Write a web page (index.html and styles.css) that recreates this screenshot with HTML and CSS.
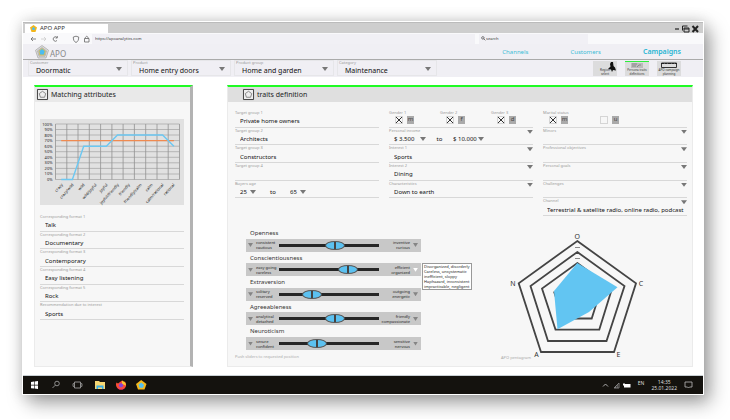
FILE: index.html
```html
<!DOCTYPE html>
<html lang="en">
<head>
<meta charset="utf-8">
<title>APO APP</title>
<link rel="stylesheet" href="styles.css">
</head>
<body>
<div class="window">
  <div class="titlebar">
    <div class="tab">
      <svg class="tab-icon" viewBox="0 0 14 14"><path d="M7 0 14 5 11 14H3L0 5Z" fill="#f2b61c"/><path d="M7 4 10 6.500 9 10H5L4 6.500Z" fill="#4cbcf0"/></svg>
      <span>APO APP</span>
    </div>
    <svg class="win-controls" viewBox="0 0 25 8"><g fill="none" stroke="#222"><path d="M1 4H5" stroke-width="1.200"/><path d="M8.500 5.500V1H13.500M10 3H15V7H10ZM10 4H15" stroke-width="1"/><path d="M18.500 1 24 7M24 1 18.500 7" stroke-width="2"/></g></svg>
  </div>
  <div class="navbar">
    <svg class="nav-icons" viewBox="0 0 62 10"><g fill="none" stroke="#666" stroke-width=".8"><path d="M6 5H1M3 3 1 5 3 7"/><path d="M11 5H16M14 3 16 5 14 7" stroke="#ccc"/><path d="M27 6.500A2.200 2.200 0 1 1 27 3.500M27.300 2V4H25.500"/><path d="M46 2.200 48.700 3C48.700 6 48 7.500 46 8.500 44 7.500 43.300 6 43.300 3Z"/><path d="M54.500 4.500H59V8H54.500ZM55.300 4.500V3.500Q56.700 1 58.200 3.500V4.500"/></g></svg>
    <input class="address" aria-label="Address" value="https://apoanalytics.com">
    <label class="search"><svg class="search-icon" viewBox="0 0 8 8"><circle cx="3" cy="3" r="2" fill="none" stroke="#333"/><path d="M4.500 4.500 7 7" stroke="#333"/></svg><input aria-label="Search" value="search"></label>
  </div>
  <header class="app-header">
    <svg class="logo" viewBox="0 0 28 28"><path d="M14 1 27 10.500 22 26H6L1 10.500Z" fill="#ddd" stroke="#aaa" stroke-width="1.500"/><path d="M14 5 23 11.700 20 22.500H8L5 11.700Z" fill="#c9c9c9" stroke="#999"/><path d="M14 7 20.500 12 18.500 20H9.500L8 12Z" fill="#4cbcf0" stroke="#e5b93a" stroke-width="1.500"/></svg>
    <span class="brand">APO</span>
    <nav class="main-nav"><a href="#channels">Channels</a><a href="#customers">Customers</a><a href="#campaigns" class="active">Campaigns</a></nav>
  </header>
  <div class="filters">
    <label class="filter"><span>Customer</span><select><option>Doormatic</option></select></label>
    <label class="filter"><span>Product</span><select><option>Home entry doors</option></select></label>
    <label class="filter"><span>Product group</span><select><option>Home and garden</option></select></label>
    <label class="filter"><span>Category</span><select><option>Maintenance</option></select></label>
    <div class="tools">
      <button class="tool"><span>Region<br>select</span><svg class="map" viewBox="0 0 8 10"><path d="M3 0H5L5.500 4 7 5.500 8 8.500 5 8 4 10 3 7.500 0 7 2.500 4.500 2 2Z" fill="#111"/></svg></button>
      <button class="tool current"><svg class="tool-art" viewBox="0 0 14 5"><path d="M1 0H13V5H1Z" fill="#bbb"/><path d="M2 1H7M2 3H6M7 4 9 2H11" stroke="#777" fill="none" stroke-width=".7"/></svg><span>Persona traits<br>definitions</span></button>
      <button class="tool"><svg class="tool-art wide" viewBox="0 0 18 6"><path d="M1.500 1H16.500V5.500H1.500Z" fill="#ddd" stroke="#333"/><path d="M1 1.500H17" stroke="#222" stroke-dasharray="3 .5"/></svg><span>APO campaign<br>planning</span></button>
    </div>
  </div>
  <main>
    <section class="panel matching">
      <h2><svg class="badge" viewBox="0 0 12 12"><path d="M.5.5H11.500V11.500H.500Z" fill="#eee" stroke="#333"/><path d="M6 2.500 9.500 5 8.300 9H3.700L2.500 5Z" fill="none" stroke="#666" stroke-width=".8"/></svg>Matching attributes</h2>
      <div class="panel-body">
        <svg class="chart" viewBox="0 0 144 86">
          <path d="M15.500 5H139.500M15.500 10.500H139.500M15.500 16H139.500M15.500 21.600H139.500M15.500 27.200H139.500M15.500 32.700H139.500M15.500 38.300H139.500M15.500 43.800H139.500M15.500 49.400H139.500M15.500 55H139.500M15.500 60.500H139.500" stroke="#aaa" stroke-width=".8"/>
          <path d="M15.500 5V60.500M26.800 5V60.500M38 5V60.500M49.300 5V60.500M60.600 5V60.500M71.900 5V60.500M83.100 5V60.500M94.400 5V60.500M105.700 5V60.500M117 5V60.500M128.200 5V60.500M139.500 5V60.500" stroke="#929292" stroke-width=".8"/>
          <path d="M21.200 21.600H133.900" stroke="#f08a50" stroke-width="1.200"/>
          <path d="M21.200 60.500H32.400L43.700 27.200H66.300L77.500 16H122.600L133.900 27.200" fill="none" stroke="#6cc8f2" stroke-width="1.400"/>
          <g class="y-axis"><text x="12.500" y="6.500">100%</text><text x="12.500" y="12">90%</text><text x="12.500" y="17.500">80%</text><text x="12.500" y="23">70%</text><text x="12.500" y="28.600">60%</text><text x="12.500" y="34.200">50%</text><text x="12.500" y="39.700">40%</text><text x="12.500" y="45.300">30%</text><text x="12.500" y="50.800">20%</text><text x="12.500" y="56.400">10%</text><text x="12.500" y="62">0%</text></g>
          <g class="x-axis"><text transform="translate(23 66) rotate(-48)">crazy</text><text transform="translate(34 66) rotate(-48)">crazy/wild</text><text transform="translate(45 66) rotate(-48)">wild</text><text transform="translate(57 66) rotate(-48)">wild/joyful</text><text transform="translate(68 66) rotate(-48)">joyful</text><text transform="translate(79 66) rotate(-48)">joyful/friendly</text><text transform="translate(90 66) rotate(-48)">friendly</text><text transform="translate(102 66) rotate(-48)">friendly/calm</text><text transform="translate(113 66) rotate(-48)">calm</text><text transform="translate(124 66) rotate(-48)">calm/rational</text><text transform="translate(135 66) rotate(-48)">rational</text></g>
        </svg>
        <div class="fields">
          <label class="field"><span>Corresponding format 1</span><input value="Talk"></label>
          <label class="field"><span>Corresponding format 2</span><input value="Documentary"></label>
          <label class="field"><span>Corresponding format 3</span><input value="Contemporary"></label>
          <label class="field"><span>Corresponding format 4</span><input value="Easy listening"></label>
          <label class="field"><span>Corresponding format 5</span><input value="Rock"></label>
          <label class="field"><span>Recommendation due to interest</span><input value="Sports"></label>
        </div>
      </div>
    </section>

    <section class="panel traits">
      <h2><svg class="badge" viewBox="0 0 12 12"><path d="M.5.5H11.500V11.500H.500Z" fill="#eee" stroke="#333"/><path d="M6 2.500 9.500 5 8.300 9H3.700L2.500 5Z" fill="none" stroke="#666" stroke-width=".8"/></svg>traits definition</h2>
      <div class="panel-body">
        <div class="columns">
          <div class="fields">
            <label class="field"><span>Target group 1</span><input value="Private home owners"></label>
            <label class="field"><span>Target group 2</span><input value="Architects"></label>
            <label class="field"><span>Target group 3</span><input value="Constructors"></label>
            <label class="field"><span>Target group 4</span><input value=""></label>
            <div class="field"><span>Buyers age</span><div class="range"><label class="pick age"><select aria-label="Minimum age"><option>25</option></select></label><span class="to">to</span><label class="pick age"><select aria-label="Maximum age"><option>65</option></select></label></div></div>
          </div>
          <div class="fields">
            <div class="field checks">
              <label><span>Gender 1</span><input type="checkbox" checked><b>m</b></label>
              <label><span>Gender 2</span><input type="checkbox" checked><b>f</b></label>
              <label><span>Gender 3</span><input type="checkbox" checked><b>d</b></label>
            </div>
            <div class="field drop"><span>Personal income</span><div class="range"><label class="pick low"><select aria-label="Lowest income"><option>$ 3.500</option></select></label><span class="to">to</span><label class="pick high"><select aria-label="Highest income"><option>$ 10.000</option></select></label></div></div>
            <label class="field drop"><span>Interest 1</span><select><option>Sports</option></select></label>
            <label class="field drop"><span>Interest 2</span><select><option>Dining</option></select></label>
            <label class="field drop"><span>Characteristics</span><select><option>Down to earth</option></select></label>
          </div>
          <div class="fields">
            <div class="field checks">
              <label><span>Marital status</span><input type="checkbox" checked><b>m</b></label>
              <label><span></span><input type="checkbox" aria-label="u"><b>u</b></label>
            </div>
            <label class="field drop"><span>Minors</span><select><option></option></select></label>
            <label class="field drop"><span>Professional objectives</span><select><option></option></select></label>
            <label class="field drop"><span>Personal goals</span><select><option></option></select></label>
            <label class="field drop"><span>Challenges</span><select><option></option></select></label>
            <label class="field drop channel"><span>Channel</span><select><option>Terrestrial &amp; satellite radio, online radio, podcast</option></select></label>
          </div>
        </div>
        <div class="lower">
          <div class="ocean">
            <div class="sliders">
              <div class="slider"><label for="o">Openness</label><div class="bar"><i></i><span>consistent<br>cautious</span><input id="o" type="range" value="57"><span class="end">inventive<br>curious</span><i></i></div></div>
              <div class="slider"><label for="c">Conscientiousness</label><div class="bar"><i></i><span>easy going<br>careless</span><input id="c" type="range" value="74"><span class="end">efficient<br>organized</span><i class="open"></i><div class="tip" role="tooltip">Disorganized, disorderly<br>Careless, unsystematic<br>inefficient, sloppy<br>Haphazard, inconsistent<br>impracticable, negligent</div></div></div>
              <div class="slider"><label for="e">Extraversion</label><div class="bar"><i></i><span>solitary<br>reserved</span><input id="e" type="range" value="29"><span class="end">outgoing<br>energetic</span><i></i></div></div>
              <div class="slider"><label for="a">Agreeableness</label><div class="bar"><i></i><span>analytical<br>detached</span><input id="a" type="range" value="57"><span class="end">friendly<br>compassionate</span><i></i></div></div>
              <div class="slider"><label for="n">Neuroticism</label><div class="bar"><i></i><span>secure<br>confident</span><input id="n" type="range" value="35"><span class="end">sensitive<br>nervous</span><i></i></div></div>
            </div>
            <p class="hint">Push sliders to requested position</p>
          </div>
          <figure>
            <svg class="pentagon" viewBox="501 227 144 128">
              <g fill="none" stroke="#444" stroke-width="1.800"><path d="M577.300 241 636 283.300 614 352H541L518.700 283.300Z"/><path d="M577.300 252 624.500 286 606.500 341H548L530.500 286Z"/><path d="M577.300 263 612 288.500 599.300 329.600H555.500L542 288.500Z"/><path d="M554 291.500 563 318.500H591.700L596 305"/></g>
              <path d="M577.300 263 617.500 287.300 589 312 557.500 329.300 554 291Z" fill="#62c5f2"/>
              <path d="M575 247.500H580M575 258.500H580" stroke="#888" stroke-width="1"/>
              <g class="corners"><text x="577.300" y="239">O</text><text x="641" y="286">C</text><text x="618.500" y="357">E</text><text x="536.500" y="357">A</text><text x="513" y="286">N</text></g>
            </svg>
            <figcaption class="hint">APO pentagram</figcaption>
          </figure>
        </div>
      </div>
    </section>
  </main>
  <footer class="taskbar">
    <svg class="apps" viewBox="0 0 118 12">
      <path d="M1 3 4 2.500V5.800H1ZM4.600 2.400 8 2V5.800H4.600ZM1 6.400H4V9.600L1 9.200ZM4.600 6.400H8V10L4.600 9.600Z" fill="#fff"/>
      <g fill="none" stroke="#aaa" stroke-width=".8"><circle cx="27" cy="4.500" r="2.300"/><path d="M25.300 6.200 22.500 9"/><path d="M44.500 3H50.500V9H44.500ZM43.500 4Q42.300 6 43.500 8M51.500 4Q52.700 6 51.500 8"/></g>
      <path d="M65 2H69L70 3H75V10H65Z" fill="#f6d774"/><path d="M66.500 6.500H73.500V10H72V8.500H68V10H66.500Z" fill="#38aee6"/>
      <path d="M86.500 3.500 88 4.500 90 3 92 1.500 93.500 3 95 2.500Q97.500 6.500 94.500 9.500 91 11.500 87.700 9.500 85 6.500 86.500 3.500Z" fill="#fb4d35"/><path d="M92 1.500Q96 3 96 6.500L92 5Z" fill="#ffc52e"/><circle cx="91" cy="6.300" r="2.100" fill="#8646d8"/><path d="M87 8Q91 11.500 95 8.500L93 10.500H89Z" fill="#f52a78"/>
      <path d="M111.200 1 116.500 5 114.500 10.500H108L106 5Z" fill="#f5b81c"/><path d="M111.200 3.500 114 5.700 113 8.700H109.500L108.500 5.700Z" fill="#55c0f0"/>
    </svg>
    <div class="tray">
      <svg class="tray-icons" viewBox="0 0 29 8"><g fill="none" stroke="#bbb" stroke-width=".9"><path d="M1 5.500 3.500 3 6 5.500"/><path d="M12 7 17 2V7ZM13.500 7V5.500M15.200 7V4" stroke="#888"/></g><path d="M22 3H28.500V6.500H22ZM21 2.500H23V4.500H21Z" fill="#fff"/></svg>
      <span class="lang">EN</span>
      <span class="clock">14:35<br>25.01.2022</span>
      <svg class="note" viewBox="0 0 9 8"><path d="M1 1H8V6H5.500L4.500 7 3.500 6H1Z" fill="none" stroke="#bbb" stroke-width=".8"/></svg>
    </div>
  </footer>
</div>
</body>
</html>
```
FILE: styles.css
```css
* { box-sizing: border-box; }
body {
  margin: 0;
  padding: 21px 26px 24px 22px;
  background: #fff;
  color: #333;
  font: 7px/10px "Noto Sans", "Open Sans", sans-serif;
}
svg { display: block; flex: none; overflow: visible; }
input, select, button {
  margin: 0; padding: 0; border: 0; border-radius: 0; outline: 0;
  background: none; color: inherit; font: inherit; appearance: none; min-width: 0;
}
.window {
  display: flex;
  flex-direction: column;
  border: 1px solid #fff;
  background: #fff;
  box-shadow: 6px 8px 18px rgba(0, 0, 0, .36), 0 0 14px rgba(0, 0, 0, .14);
}

.titlebar {
  display: flex; justify-content: space-between; align-items: center;
  height: 11px; padding: 1px 4px 0 2px;
  background: #cecece; border-top: 1px solid #bbb;
}
.tab { display: flex; align-items: center; gap: 3px; width: 83px; height: 9px; padding-left: 5px; background: #fff; font-size: 6px; line-height: 9px; }
.tab-icon { width: 7px; height: 7px; }
.win-controls { width: 25px; height: 8px; }

.navbar { display: flex; align-items: center; height: 11px; padding-left: 7px; background: #f9f9fb; font-size: 4px; }
.nav-icons { width: 62px; height: 10px; }
.address { flex: 1; height: 10px; padding-left: 3px; background: #f1f0f5; }
.search { display: flex; align-items: center; width: 109px; height: 10px; margin: 0 115px 0 4px; padding-left: 2px; background: #f1f0f5; font-size: 4px; }
.search-icon { width: 5px; height: 5px; }
.search input { flex: 1; }

.app-header { display: flex; align-items: center; height: 16px; padding: 0 22px 0 12px; background: #f0eff4; border-bottom: 1px solid #aaa; }
.logo { width: 14px; height: 14px; }
.brand { margin-left: 1px; padding-top: 4px; color: #888; font-size: 8px; }
.main-nav { display: flex; align-items: center; gap: 42px; margin-left: auto; }
.main-nav a { color: #3bbcd6; font-size: 6px; text-decoration: none; }
.main-nav .active { font-size: 7px; font-weight: 600; color: #27b5d3; }

.filters { display: flex; gap: 3px; height: 17px; padding: 0 22px 1px 5px; background: #f0eff4; }
.filter { position: relative; width: 100px; padding-left: 7px; border: 1px solid #e6e6e9; }
.filter span { display: block; margin-left: -6px; color: #999; font-size: 4px; line-height: 4px; }
.filter select { display: block; width: 100%; height: 11px; line-height: 11px; color: #111; }
.filter::after, .drop::after, .pick::after {
  content: ""; position: absolute; background: #777;
  width: 6px; height: 4px; clip-path: polygon(0 0, 100% 0, 50% 100%);
}
.filter::after { right: 5px; top: 6px; }
.tools { display: flex; gap: 8px; margin: 1px 0 0 auto; }
.tool { position: relative; display: flex; flex-direction: column; justify-content: flex-end; align-items: center; width: 24px; height: 15px; background: #dcdcdd; font-size: 3px; line-height: 4px; }
.tool.current { border-top: 1px solid #2df03c; }
.tool-art { width: 14px; height: 5px; }
.tool-art.wide { width: 18px; height: 6px; }
.map { position: absolute; right: 1px; top: 1px; width: 8px; height: 10px; }

main { display: flex; gap: 34px; padding: 8px 10px 8px 11px; }
.panel { display: flex; flex-direction: column; background: #f7f7f7; border: solid #ebebeb; border-width: 0 1px 1px; border-top: 2px solid #1ffb24; }
.matching { flex: none; width: 159px; border-right: 3px solid #b3b3b3; }
.traits { flex: 1; min-width: 0; }
h2 { display: flex; align-items: center; gap: 3px; height: 15px; margin: 0; padding-left: 2px; background: #e9e9e9; color: #222; font-size: 7px; font-weight: 400; }
.traits h2 { padding-left: 15px; background: #dfdfdf; }
.badge { width: 11px; height: 11px; }
.matching .panel-body { padding: 17px 6px 0 5px; }
.chart { width: 100%; height: 86px; background: #e1e1e1; }
.chart text { font-size: 4px; fill: #222; text-anchor: end; }
.matching .fields { height: 106px; margin-top: 9px; }

.fields { display: grid; grid-template-columns: minmax(0, 1fr); grid-template-rows: repeat(6, 1fr); }
.field { position: relative; display: flex; flex-direction: column; border-bottom: 1px solid #d8d8d8; }
.field > span, .checks span { color: #999; font-size: 4px; line-height: 6px; }
.field > input, .field > select { flex: 1; width: 100%; height: 10px; padding-left: 5px; line-height: 10px; font-size: 6px; color: #111; }
.drop::after { right: 0; top: 2px; }

.traits .panel-body { padding: 8px 5px 0 7px; }
.columns { display: grid; grid-template-columns: repeat(3, minmax(0, 1fr)); gap: 10px; }
.columns .fields { height: 106px; }
.range { display: flex; align-items: center; flex: 1; padding-left: 5px; font-size: 6px; color: #111; }
.pick { position: relative; display: flex; }
.pick::after { right: 0; top: 3px; }
.pick select { height: 10px; line-height: 10px; width: 100%; }
.age { width: 16px; }
.age + .to { width: 34px; text-align: center; }
.low { width: 32px; }
.low + .to { width: 27px; text-align: center; }
.high { width: 31px; }
.field.checks { flex-direction: row; }
.checks label { display: flex; flex: none; flex-wrap: wrap; align-content: flex-start; gap: 0 4px; width: 51px; padding-left: 6px; }
.checks label:last-child { width: 42px; }
.checks span { width: 100%; height: 6px; margin-left: -6px; }
.checks input { width: 8px; height: 8px; border: 1px solid #d5d5d5; }
.checks input:checked {
  background:
    linear-gradient(45deg, transparent 42%, #333 42% 58%, transparent 58%),
    linear-gradient(-45deg, transparent 42%, #333 42% 58%, transparent 58%);
}
.checks b { width: 7px; height: 8px; background: #aaa; color: #444; font-size: 6px; font-weight: 400; line-height: 7px; text-align: center; }
.channel > select { padding-left: 4px; }

.lower { display: flex; justify-content: space-between; margin-top: 11px; }
.ocean { width: 186px; }
.sliders { display: grid; grid-template-rows: repeat(5, 1fr); height: 123px; padding-left: 11px; }
.slider { display: flex; flex-direction: column; justify-content: space-between; }
.slider label { padding: 1px 0 0 4px; font-size: 6px; color: #333; }
.bar { position: relative; display: flex; align-items: center; gap: 3px; height: 13px; padding: 0 3px 0 2px; background: #c8c8c8; color: #222; font-size: 4px; line-height: 5px; }
.bar i { width: 5px; height: 4px; background: #858585; clip-path: polygon(0 0, 100% 0, 50% 100%); }
.bar i.open { background: #fff; }
.bar span { width: 20px; white-space: nowrap; }
.bar .end { flex: 1; display: flex; justify-content: flex-end; text-align: right; }
.bar input { width: 100px; height: 9px; background: linear-gradient(#262626, #262626) center / 100% 3px no-repeat; }
.bar input::-webkit-slider-thumb {
  appearance: none; width: 20px; height: 9px;
  border: 1px solid #555; border-radius: 50%;
  background: linear-gradient(90deg, #5cc1f0 8px, #444 8px 10px, #5cc1f0 10px);
}
.tip { position: absolute; left: 100%; top: 0; margin-left: 1px; padding: 0 1px; background: #fff; border: 1px solid #999; font-size: 4px; line-height: 5px; white-space: nowrap; }
.hint { margin: 4px 0 6px; color: #aaa; font-size: 4px; line-height: 6px; }
figure { margin: 0 42px 0 0; }
.pentagon { width: 144px; height: 128px; }
figure .hint { margin: 0; }
.corners text { font-size: 7px; fill: #333; text-anchor: middle; }

.taskbar { display: flex; justify-content: space-between; align-items: center; height: 19px; padding: 0 10px 0 7px; background: #14120e; border-top: 1px solid #c9d0d4; color: #ddd; }
.apps { width: 118px; height: 12px; }
.tray { display: flex; align-items: center; gap: 7px; font-size: 5px; line-height: 6px; }
.tray-icons { width: 29px; height: 8px; }
.lang { padding-bottom: 4px; }
.clock { text-align: center; }
.note { width: 9px; height: 8px; }
```
